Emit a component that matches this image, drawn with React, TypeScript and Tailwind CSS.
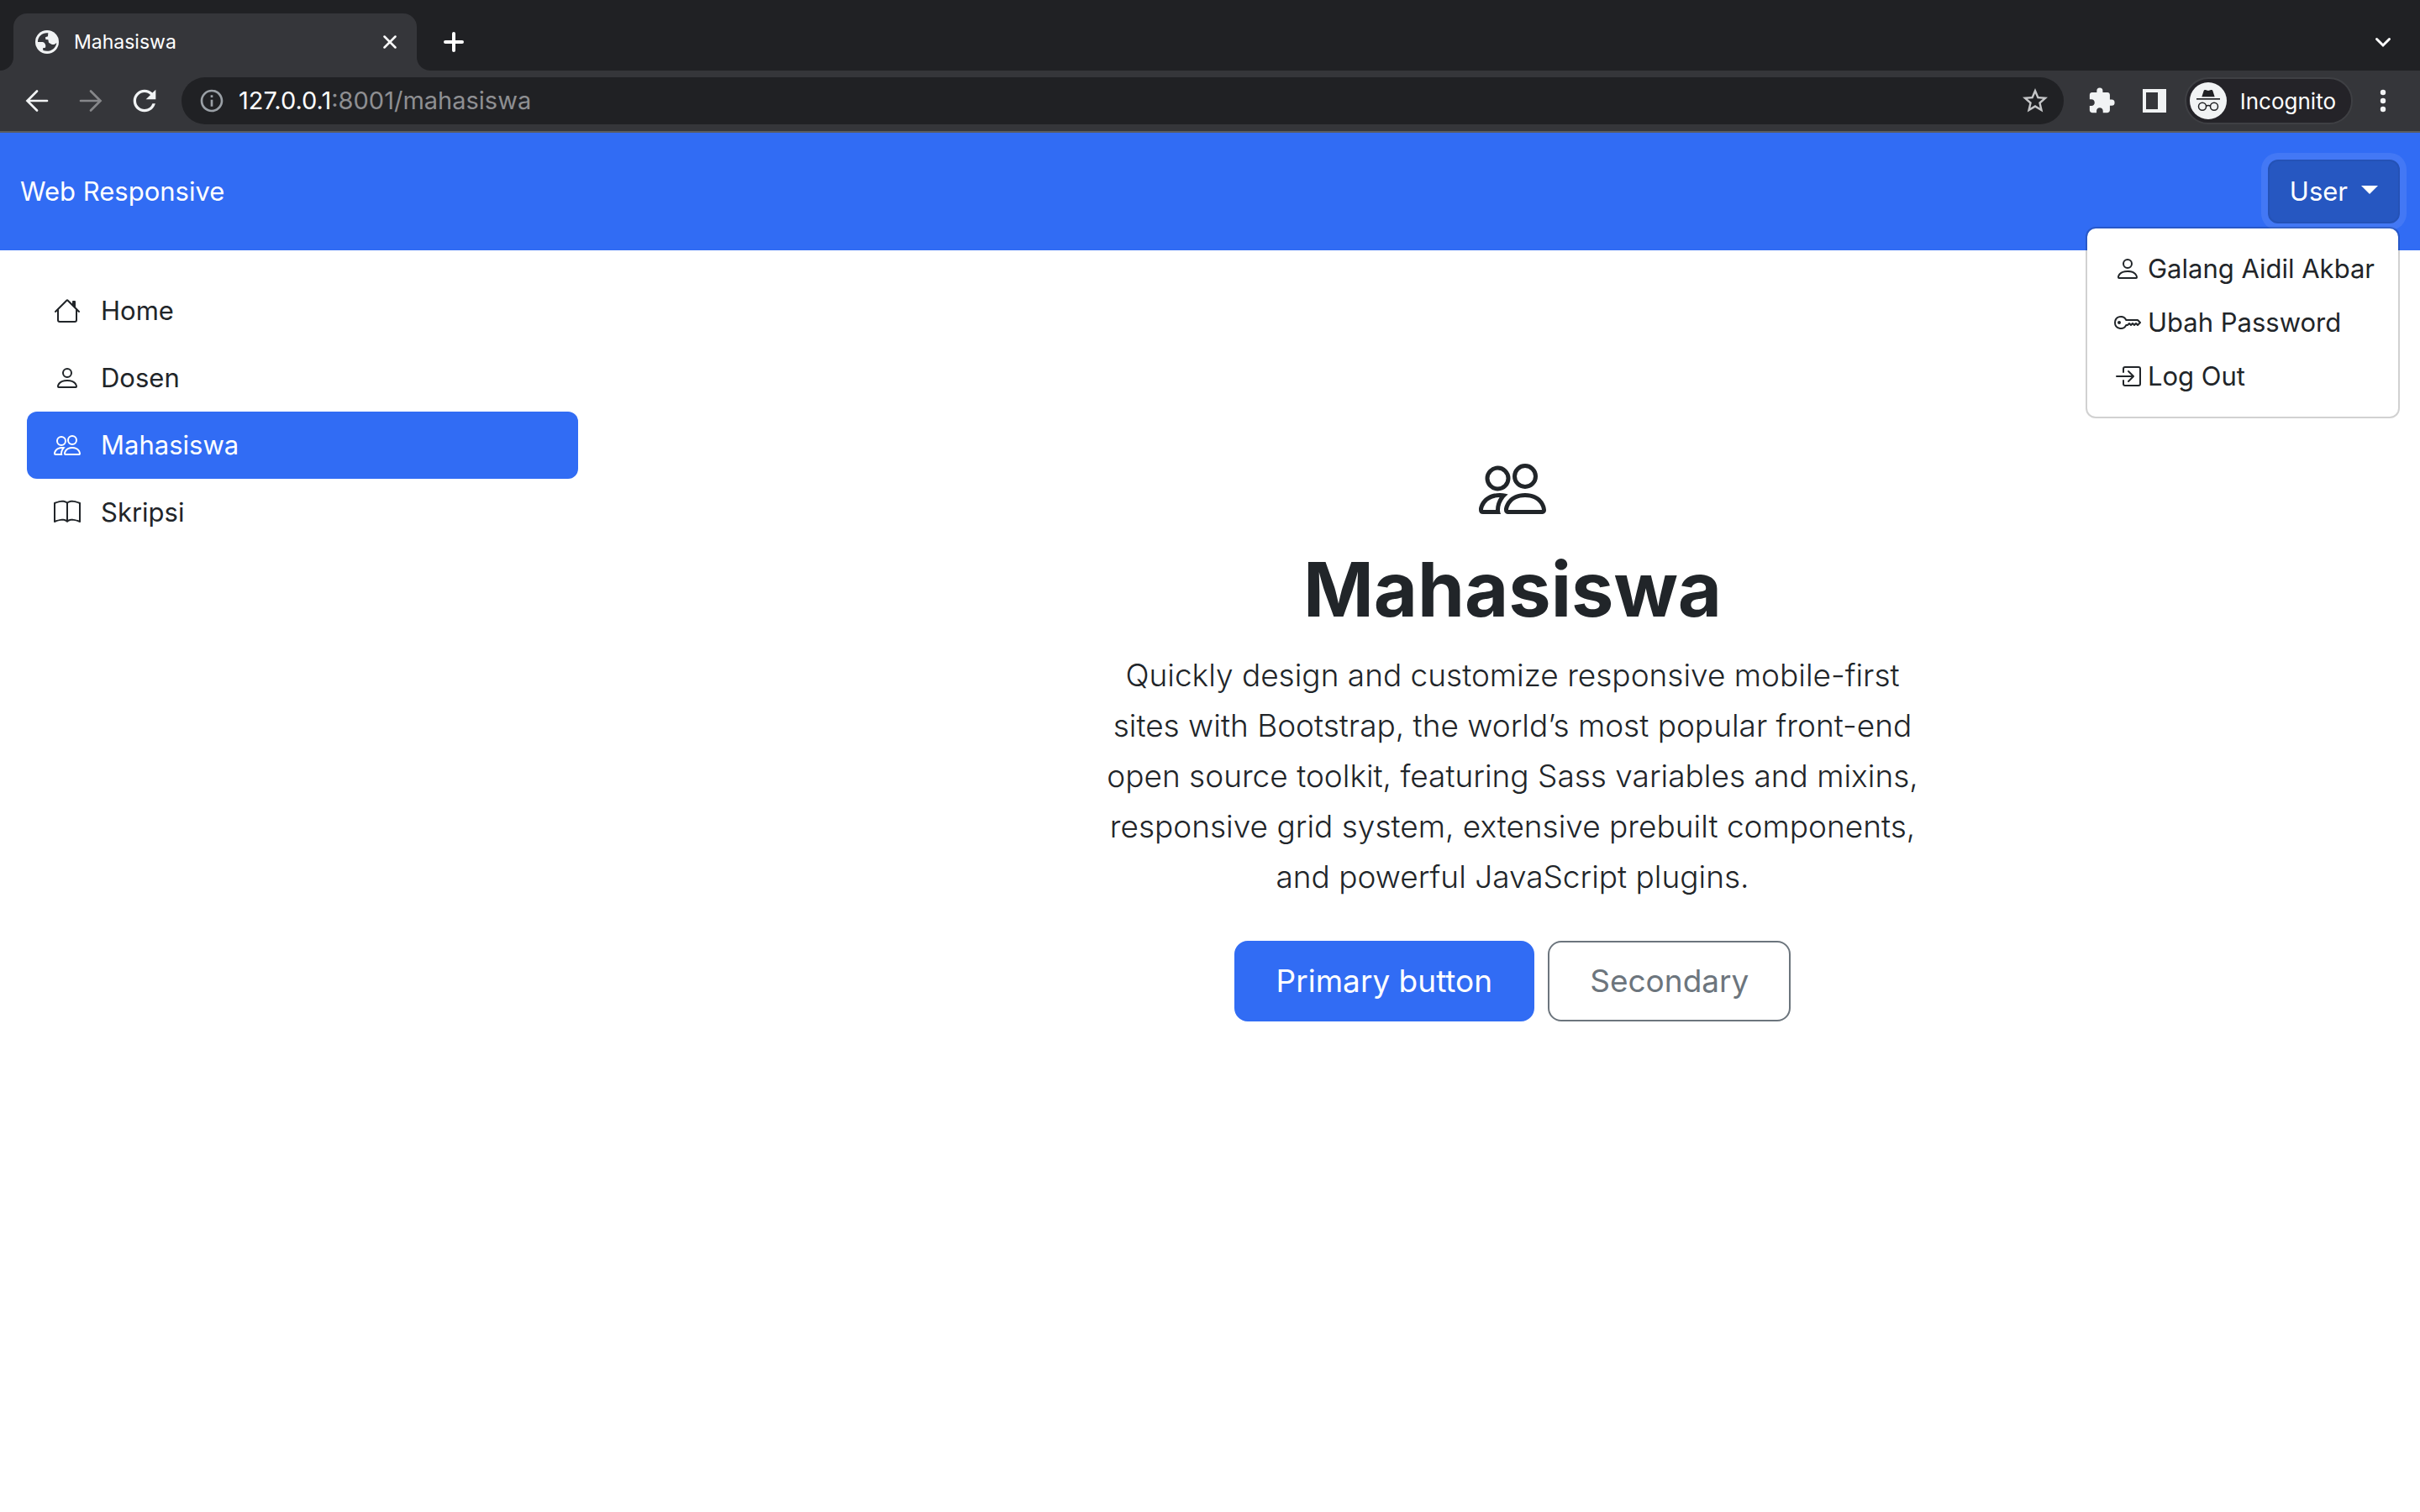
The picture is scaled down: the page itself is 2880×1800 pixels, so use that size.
import { useState } from "react";
import { BsHouse, BsPerson, BsPeople, BsBook, BsKey, BsBoxArrowInRight } from "react-icons/bs";
import { MdRefresh, MdInfoOutline, MdStarBorder, MdExtension } from "react-icons/md";

const nav = [
  { label: "Home", icon: BsHouse },
  { label: "Dosen", icon: BsPerson },
  { label: "Mahasiswa", icon: BsPeople },
  { label: "Skripsi", icon: BsBook },
];

const menu = [
  { label: "Galang Aidil Akbar", icon: BsPerson },
  { label: "Ubah Password", icon: BsKey },
  { label: "Log Out", icon: BsBoxArrowInRight },
];

function GlobeIcon() {
  return (
    <svg viewBox="0 0 84 84" className="size-7" aria-hidden="true">
      <circle cx="42" cy="42" r="42" fill="#f1f3f4" />
      <path
        fill="#35363a"
        d="M46 10C28 7 11 20 9 38v4h17c7 1 11 8 11 14l-1 6-9 2 1 8c22 8 45-4 48-27-5 5-12 8-18 5l-10-6-2-10-9-1-1-8 9-3z"
      />
    </svg>
  );
}

function IncognitoIcon() {
  return (
    <svg viewBox="0 0 132 132" className="size-11" aria-hidden="true">
      <circle cx="66" cy="66" r="66" fill="#f1f3f4" />
      <path fill="#202124" d="M43 52l7-22c1-3 3-4 6-3l10 3 10-3c3-1 5 0 6 3l7 22z" />
      <path fill="#202124" d="M24 57h84v5H24z" />
      <g fill="none" stroke="#202124" strokeWidth="4.500">
        <circle cx="45" cy="86" r="13.500" />
        <circle cx="87" cy="86" r="13.500" />
        <path d="M58 85c5-3 11-3 16 0" />
      </g>
    </svg>
  );
}

function Arrow({ back = false }: { back?: boolean }) {
  return (
    <svg
      viewBox="0 0 28 28"
      className="size-7"
      fill="none"
      stroke="currentColor"
      strokeWidth="2.700"
      strokeLinecap="round"
      aria-hidden="true"
    >
      {back ? <path d="M26 14H3M14 2.500L2.500 14 14 25.500" /> : <path d="M2 14h23M14 2.500L25.500 14 14 25.500" />}
    </svg>
  );
}

function Browser() {
  return (
    <div className="bg-[#202124] text-white">
      <div className="flex h-[84px] items-end justify-between">
        <div className="flex h-[68px] items-stretch">
          <div className="w-4 bg-[#35363a]">
            <div className="h-full rounded-br-2xl bg-[#202124]" />
          </div>
          <div className="flex w-[480px] items-center rounded-t-2xl bg-[#35363a] pr-6 pl-[26px]">
            <GlobeIcon />
            <span className="ml-[18px] flex-1 text-[23px]">Mahasiswa</span>
            <button aria-label="Close tab">
              <svg viewBox="0 0 16 16" className="size-4" fill="none" stroke="currentColor" strokeWidth="2.500" strokeLinecap="round">
                <path d="M1.500 1.500l13 13M14.500 1.500l-13 13" />
              </svg>
            </button>
          </div>
          <div className="w-4 bg-[#35363a]">
            <div className="h-full rounded-bl-2xl bg-[#202124]" />
          </div>
          <button aria-label="New tab" className="ml-4 flex items-center">
            <svg viewBox="0 0 24 24" className="size-6" fill="none" stroke="currentColor" strokeWidth="4" strokeLinecap="round">
              <path d="M12 2v20M2 12h20" />
            </svg>
          </button>
        </div>
        <button aria-label="Search tabs" className="mr-[34px] flex h-[68px] items-center">
          <svg viewBox="0 0 20 20" className="size-5" fill="none" stroke="currentColor" strokeWidth="3" strokeLinecap="round">
            <path d="M2.500 6.500l7.500 7.500 7.500-7.500" />
          </svg>
        </button>
      </div>
      <div className="flex h-[74px] items-center border-b-2 border-[#5b5c5f] bg-[#35363a] pr-10 pl-[30px]">
        <button aria-label="Back" className="text-[#f1f3f4]">
          <Arrow back />
        </button>
        <button aria-label="Forward" className="ml-9 text-[#86878a]">
          <Arrow />
        </button>
        <button aria-label="Reload" className="ml-[30px] text-[#f1f3f4]">
          <MdRefresh className="size-10" />
        </button>
        <div className="ml-6 flex h-14 flex-1 items-center rounded-full bg-[#202124] pr-4 pl-5">
          <MdInfoOutline className="size-8 text-[#9aa0a6]" />
          <div
            role="textbox"
            aria-label="Address"
            contentEditable
            suppressContentEditableWarning
            className="ml-4 flex-1 text-[29px]"
          >
            127.0.0.1<span className="text-[#8e8f92]">:8001/mahasiswa</span>
          </div>
          <button aria-label="Bookmark this tab">
            <MdStarBorder className="size-9 text-[#c4c5c7]" />
          </button>
        </div>
        <button aria-label="Extensions" className="ml-7 text-[#f1f3f4]">
          <MdExtension className="size-[34px]" />
        </button>
        <button aria-label="Side panel" className="ml-8">
          <svg viewBox="0 0 28 28" className="size-7" aria-hidden="true">
            <path fill="#f1f3f4" fillRule="evenodd" d="M0 0h28v28H0zM4 4v20h14V4z" />
          </svg>
        </button>
        <button className="ml-[22px] flex h-14 items-center rounded-full border-2 border-[#3f4044] bg-[#242328] pr-[18px] pl-1 text-[26px]">
          <IncognitoIcon />
          <span className="ml-4">Incognito</span>
        </button>
        <button aria-label="Menu" className="ml-8">
          <svg viewBox="0 0 8 28" className="h-7 w-2" fill="#f1f3f4">
            <circle cx="4" cy="4" r="3.200" />
            <circle cx="4" cy="14" r="3.200" />
            <circle cx="4" cy="24" r="3.200" />
          </svg>
        </button>
      </div>
    </div>
  );
}

export default function App() {
  const [open, setOpen] = useState(true);
  const [active, setActive] = useState("Mahasiswa");
  return (
    <div className="min-h-screen bg-white font-['Inter',sans-serif] text-[31px] text-[#212529]">
      <Browser />
      <header className="relative flex h-[140px] items-center justify-between bg-[#316cf4] px-6 text-white">
        <a href="#">Web Responsive</a>
        <button
          aria-expanded={open}
          onClick={() => setOpen(!open)}
          className="flex h-[76px] items-center gap-4 rounded-xl border-2 border-[#2452b6] bg-[#2657c1] px-6 ring-8 ring-[#4378f5]"
        >
          User
          <svg viewBox="0 0 20 10" className="mb-1 h-2.5 w-5" fill="currentColor" aria-hidden="true">
            <path d="M0 0h20L10 10z" />
          </svg>
        </button>
        {open && (
          <ul className="absolute top-28 right-6 rounded-xl border-2 border-black/18 bg-white bg-clip-padding py-4 text-[#212529]">
            {menu.map((m) => (
              <li key={m.label}>
                <a href="#" className="flex h-16 items-center gap-2 pr-7 pl-8">
                  <m.icon className="size-8" />
                  {m.label}
                </a>
              </li>
            ))}
          </ul>
        )}
      </header>
      <div className="flex">
        <nav className="w-1/4 p-8">
          {nav.map((n) => (
            <a
              key={n.label}
              href="#"
              onClick={() => setActive(n.label)}
              className={
                n.label === active
                  ? "flex h-20 items-center gap-6 rounded-xl bg-[#316cf4] px-8 text-white"
                  : "flex h-20 items-center gap-6 px-8"
              }
            >
              <n.icon className="size-8" />
              {n.label}
            </a>
          ))}
        </nav>
        <main className="flex w-3/4 flex-col items-center pt-[244px] text-center">
          <BsPeople className="size-20" />
          <h1 className="mt-6 text-[90px] leading-[112px] font-bold">Mahasiswa</h1>
          <p className="mt-4 w-1/2 px-12 text-[37px] leading-[60px] font-light">
            Quickly design and customize responsive mobile-first sites with Bootstrap, the world’s most popular
            front-end open source toolkit, featuring Sass variables and mixins, responsive grid system, extensive
            prebuilt components, and powerful JavaScript plugins.
          </p>
          <div className="mt-[46px] flex gap-4 text-[37px]">
            <button className="h-24 rounded-2xl border-2 border-[#316cf4] bg-[#316cf4] px-12 text-white">
              Primary button
            </button>
            <button className="h-24 rounded-2xl border-2 border-[#6c757d] px-12 text-[#6c757d]">Secondary</button>
          </div>
        </main>
      </div>
    </div>
  );
}
